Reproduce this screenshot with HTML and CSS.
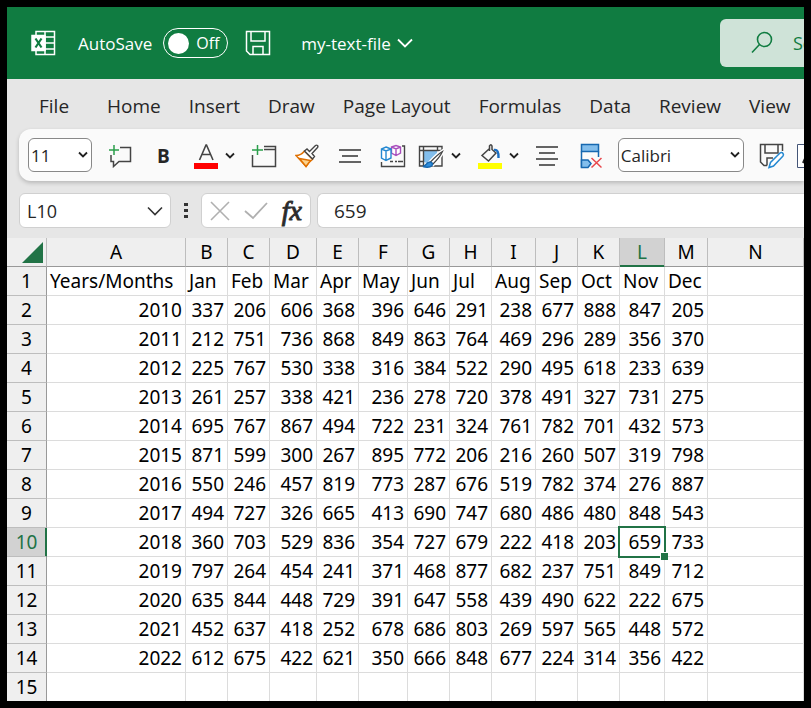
FILE: index.html
```html
<!DOCTYPE html>
<html lang="en">
<head>
  <meta charset="UTF-8" />
  <meta name="viewport" content="width=device-width, initial-scale=1.0" />
  <title>my-text-file</title>
  <link rel="stylesheet" href="styles.css">
</head>
<body>
  <div class="window">

    <!-- Title bar -->
    <header class="title-bar">
      <svg class="app-logo" width="26" height="26" viewBox="0 0 26 26" fill="none" stroke="#fff" stroke-width="1.5">
        <path d="M6 5V1.5h18.500v23H6V21M15 1.500v23M6 7h18.500M15 13h9.500M6 19h18.500" />
        <path d="M2 5.500h13v15H2z" fill="#fff" />
        <path d="M5.500 8.500l6 9M11.500 8.500l-6 9" stroke="#107c41" stroke-width="2.200" />
      </svg>
      <span class="autosave-label" id="autosave-label">AutoSave</span>
      <button class="autosave-toggle" role="switch" aria-checked="false" aria-labelledby="autosave-label">
        <span class="knob"></span>Off
      </button>
      <button class="icon-btn save-btn" aria-label="Save">
        <svg width="26" height="26" viewBox="0 0 26 26" fill="none" stroke="#fff" stroke-width="1.500">
          <path d="M1.500 1.500h23v23H5l-3.500-3.500zM6 1.500V11h14V1.500M8 24.500V16.500h10v8" />
        </svg>
      </button>
      <button class="file-btn">my-text-file
        <svg width="16" height="16" viewBox="0 0 16 16" fill="none" stroke="#fff" stroke-width="1.800"><path d="M1 4.500l7 7 7-7" /></svg>
      </button>
      <label class="search">
        <svg width="22" height="24" viewBox="0 0 22 24" fill="none" stroke="#107c41" stroke-width="1.600"><circle cx="13.500" cy="8.500" r="7" /><path d="M8.500 13.500L1 21.500" /></svg>
        <input type="text" placeholder="Search" aria-label="Search">
      </label>
    </header>

    <!-- Ribbon tabs -->
    <nav class="tabs">
      <a class="file-tab" href="#">File</a>
      <a href="#">Home</a>
      <a href="#">Insert</a>
      <a href="#">Draw</a>
      <a href="#">Page Layout</a>
      <a href="#">Formulas</a>
      <a href="#">Data</a>
      <a href="#">Review</a>
      <a href="#">View</a>
    </nav>

    <!-- Toolbar -->
    <div class="toolbar">
      <select class="size-select" aria-label="Font size"><option>11</option></select>
      <button class="icon-btn comment-btn" aria-label="New comment">
        <svg width="24" height="24" viewBox="0 0 24 24" fill="none" stroke="#444" stroke-width="1.500">
          <path d="M12 3.500h10.500v14H11l-5.500 5v-5H3V11" />
          <path d="M6 1v10M1 6h10" stroke="#2b9f4b" />
        </svg>
      </button>
      <button class="icon-btn bold-btn">B</button>
      <button class="icon-btn color-btn" aria-label="Font color">
        <svg width="24" height="26" viewBox="0 0 24 26" fill="none" stroke="#444" stroke-width="1.600">
          <path d="M5.500 17L12 2h.5L19 17M8 11.500h8.500" />
          <path d="M0 20h24v6H0z" fill="#f00" stroke="none" />
        </svg>
        <svg width="10" height="8" viewBox="0 0 10 8" fill="none" stroke="#222" stroke-width="1.800"><path d="M1 1.500l4 4 4-4" /></svg>
      </button>
      <button class="icon-btn insert-btn" aria-label="New sheet">
        <svg width="26" height="24" viewBox="0 0 26 24" fill="none" stroke="#444" stroke-width="1.500">
          <path d="M13 2.500h11.500v20h-23V11M13 5.500h11" />
          <path d="M6.500 1v10M1 6h11" stroke="#2b9f4b" />
        </svg>
      </button>
      <button class="icon-btn painter-btn" aria-label="Format painter">
        <svg width="24" height="24" viewBox="0 0 24 24" fill="none" stroke="#444" stroke-width="1.400">
          <path d="M1 11.500q5 0 8.500-4.500l8 8.500q-3 2-6.500 7z" fill="#fff" stroke="#e07000" />
          <path d="M4.500 14.500l11 2-4.500 6z" fill="#fbd28c" stroke="#e07000" />
          <path d="M9.500 7l2.500-2 2.500 2.500L20.500 1.500q1-.8 2 0 .8 1 0 2L17 9.500l2.500 3-2 2.500z" fill="#fff" />
        </svg>
      </button>
      <button class="icon-btn center-btn" aria-label="Center">
        <svg width="22" height="16" viewBox="0 0 22 16" stroke="#333" stroke-width="1.500"><path d="M0 2h22M3 8h16M0 14h22" /></svg>
      </button>
      <button class="icon-btn shapes-btn" aria-label="3D models">
        <svg width="26" height="24" viewBox="0 0 26 24" fill="none" stroke-width="1.400">
          <path d="M22 2h2.500v20.500h-23V18M10 17.500h3M15 17.500h2M18 17.500h5" stroke="#444" />
          <path d="M11.500 3l4.500-1.500L20.500 3v6L16 11.500 11.500 9zM11.500 3L16 5l4.500-2M16 5v6.500" fill="#fff" stroke="#a94fbd" />
          <path d="M6 3l5 2v9l-5 2.500L1.500 14V5zM1.500 5L6 7l5-2M6 7v9" fill="#fff" stroke="#2488d1" />
        </svg>
      </button>
      <button class="icon-btn style-btn" aria-label="Table style">
        <svg width="26" height="24" viewBox="0 0 26 24" fill="none" stroke="#444" stroke-width="1.400">
          <path d="M6 7h13v8l-5 6-8-3z" fill="#83beec" stroke="none" />
          <path d="M1.500 2.500h22.500v19.500h-22.500zM1.500 6.500H24M5.500 2.500V22M19.500 2.500v4M1.500 17.500h4" />
          <path d="M24.500 7.500q-5 3-12 10.500l2.500 2q7-7 9.500-12.500z" fill="#fff" stroke="#fff" stroke-width="4" />
          <path d="M24.500 7.500q-5 3-12 10.500l2.500 2q7-7 9.500-12.500z" fill="#fff" stroke-width="1.200" />
          <path d="M5 22.500c3 0 3-4.500 7-4.500 2 0 3 2 2 3.500-2 2-6 2-9 1z" fill="#2e8ddb" stroke="#1768b0" />
        </svg>
        <svg width="10" height="8" viewBox="0 0 10 8" fill="none" stroke="#222" stroke-width="1.800"><path d="M1 1.500l4 4 4-4" /></svg>
      </button>
      <button class="icon-btn fill-btn" aria-label="Fill color">
        <svg width="24" height="26" viewBox="0 0 24 26" fill="none" stroke="#444" stroke-width="1.500">
          <path d="M11 6L4 12.500l6.500 5.500L18 10l-4-3.500V3q-1-2.500-2.500 0v5" />
          <path d="M16 7q5-1 4.500 8" stroke="#1b6ec2" stroke-width="2.400" />
          <path d="M0 20h24v6H0z" fill="#ff0" stroke="none" />
        </svg>
        <svg width="10" height="8" viewBox="0 0 10 8" fill="none" stroke="#222" stroke-width="1.800"><path d="M1 1.500l4 4 4-4" /></svg>
      </button>
      <button class="icon-btn middle-btn" aria-label="Middle align">
        <svg width="22" height="22" viewBox="0 0 22 22" stroke="#333" stroke-width="1.500"><path d="M0 2h22M3 8h16M0 14h22M3 20h16" /></svg>
      </button>
      <button class="icon-btn delete-btn" aria-label="Delete rows">
        <svg width="22" height="26" viewBox="0 0 22 26" fill="none" stroke="#1768b0" stroke-width="1.500">
          <path d="M1.500 1.500h17v7h-17z" fill="#83beec" />
          <path d="M1.500 8.500v16M18.500 8.500V14" />
          <path d="M1.500 17H8l3 3.500-3 4H1.500z" fill="#83beec" />
          <path d="M11.500 15l10 9.500M21.500 15l-10 9.500" stroke="#e8474c" />
        </svg>
      </button>
      <select class="font-select" aria-label="Font"><option>Calibri</option></select>
      <button class="icon-btn save-as-btn" aria-label="Save as">
        <svg width="26" height="26" viewBox="0 0 26 26" fill="none" stroke="#444" stroke-width="1.500">
          <path d="M8 22.500H5L1.500 19V1.500h22V8M6 1.500V10h13V1.500M8 22.500V15h6" />
          <path d="M10 24.500l1.500-5L21 10q2-1 3 .5 1 1.500 0 2.500l-9.500 10z" fill="#fff" stroke="#2488d1" />
        </svg>
      </button>
      <button class="icon-btn text-box-btn" aria-label="Text box">
        <svg width="24" height="24" viewBox="0 0 24 24" fill="#fff" stroke="#445577"><path d="M.5.5h23v23H.5z" /><path d="M6 19l6-14 6 14M8 14h8" fill="none" stroke="#222" stroke-width="2" /></svg>
      </button>
    </div>

    <!-- Formula bar -->
    <div class="formula-bar">
      <button class="name-box">L10
        <svg width="16" height="10" viewBox="0 0 16 10" fill="none" stroke="#333" stroke-width="1.600"><path d="M1 1.500l7 7 7-7" /></svg>
      </button>
      <svg class="dots" width="4" height="16" viewBox="0 0 4 16" fill="#333"><path d="M0 0h4v3H0zM0 6h4v3H0zM0 12h4v3H0z" /></svg>
      <div class="formula-actions">
        <button class="icon-btn" aria-label="Cancel"><svg width="20" height="20" viewBox="0 0 20 20" stroke="#b0b0b0" stroke-width="1.600"><path d="M1 1l18 18M19 1L1 19" /></svg></button>
        <button class="icon-btn" aria-label="Enter"><svg width="24" height="18" viewBox="0 0 24 18" fill="none" stroke="#b0b0b0" stroke-width="1.800"><path d="M1 9l8 7L23 1" /></svg></button>
        <button class="icon-btn fx">fx</button>
      </div>
      <input class="formula-input" type="text" value="659" aria-label="Formula">
    </div>

    <!-- Worksheet, filled by script.js -->
    <table class="sheet" id="sheet"></table>
  </div>

  <script src="script.js"></script>
</body>
</html>
```
FILE: styles.css
```css
* {
  box-sizing: border-box;
}

body {
  margin: 0;
  padding: 7px;
  min-height: 100vh;
  background: #000;
  font-family: "Open Sans", sans-serif;
  color: #262626;
}

.window {
  background: #e6e6e6;
  overflow: hidden;
}

button,
input,
select {
  font-family: inherit;
  color: inherit;
  margin: 0;
}

svg {
  flex: none;
}

.icon-btn {
  display: flex;
  flex: none;
  align-items: center;
  gap: 7px;
  padding: 0;
  border: none;
  background: none;
}

/* Title bar */
.title-bar {
  display: flex;
  align-items: center;
  height: 72px;
  padding-left: 23px;
  background: #107c41;
  color: #fff;
  font-size: 17px;
  white-space: nowrap;
}

.autosave-label {
  margin-left: 22px;
}

.autosave-toggle {
  display: flex;
  flex: none;
  align-items: center;
  gap: 7px;
  width: 65px;
  height: 30px;
  margin-left: 11px;
  padding: 0 4px;
  border: 1px solid #fff;
  border-radius: 15px;
  background: none;
  font-size: 16px;
}

.knob {
  width: 21px;
  height: 21px;
  border-radius: 50%;
  background: #fff;
}

.save-btn {
  margin-left: 17px;
}

.file-btn {
  display: flex;
  align-items: center;
  gap: 6px;
  margin-left: 30px;
  padding: 0;
  border: none;
  background: none;
  font-size: 17px;
}

.search {
  display: flex;
  align-items: center;
  gap: 20px;
  width: 84px;
  height: 48px;
  margin-left: auto;
  padding-left: 31px;
  border-radius: 6px 0 0 6px;
  background: #cfe3d8;
  overflow: hidden;
}

.search input {
  width: 90px;
  flex: none;
  padding: 0;
  border: none;
  background: none;
  font-size: 18px;
}

.search input::placeholder {
  color: #107c41;
}

/* Ribbon */
.tabs {
  display: flex;
  align-items: center;
  gap: 28px;
  height: 50px;
  padding: 4px 0 0 32px;
  font-size: 19px;
  white-space: nowrap;
}

.tabs a {
  color: #262626;
  text-decoration: none;
}

.tabs .file-tab {
  margin-right: 10px;
}

.toolbar {
  display: flex;
  align-items: center;
  height: 52px;
  margin-left: 12px;
  padding-left: 9px;
  border-radius: 12px 0 0 12px;
  background: #fafafa;
  box-shadow: 0 2px 4px rgba(0, 0, 0, 0.2);
}

.toolbar select {
  appearance: none;
  flex: none;
  height: 34px;
  padding: 0 2px;
  border: 1px solid #888;
  border-radius: 6px;
  background: #fff url("data:image/svg+xml,%3Csvg xmlns='http://www.w3.org/2000/svg' width='10' height='8' fill='none' stroke='%23222' stroke-width='1.8'%3E%3Cpath d='M1 1.5l4 4 4-4'/%3E%3C/svg%3E") no-repeat right 3px center;
  font-size: 17px;
}

.size-select {
  width: 64px;
}

.toolbar .icon-btn {
  padding-top: 2px;
}

.font-select {
  width: 126px;
  margin-left: 16px;
}

.comment-btn {
  margin-left: 16px;
}

.toolbar .bold-btn {
  margin-left: 25px;
  font-size: 19px;
  font-weight: 700;
}

.color-btn {
  margin-left: 24px;
}

.insert-btn {
  margin-left: 16px;
}

.painter-btn {
  margin-left: 18px;
}

.center-btn {
  margin-left: 20px;
}

.shapes-btn {
  margin-left: 19px;
}

.style-btn {
  margin-left: 12px;
}

.fill-btn {
  margin-left: 17px;
}

.middle-btn {
  margin-left: 17px;
}

.delete-btn {
  margin-left: 22px;
}

.save-as-btn {
  margin-left: 15px;
}

.text-box-btn {
  margin-left: 12px;
}

/* Formula bar */
.formula-bar {
  display: flex;
  align-items: center;
  padding: 12px 0 10px 12px;
}

.name-box,
.formula-actions,
.formula-input {
  height: 35px;
  border: 1px solid #d0d0d0;
  border-radius: 6px;
  background: #fff;
  font-size: 19px;
}

.name-box {
  display: flex;
  flex: none;
  align-items: center;
  justify-content: space-between;
  width: 152px;
  padding: 0 7px;
  font-size: 18px;
}

.dots {
  margin: 0 13px;
}

.formula-actions {
  display: flex;
  flex: none;
  align-items: center;
  justify-content: space-between;
  width: 110px;
  padding: 0 8px;
}

.fx {
  font-family: "Liberation Serif", serif;
  font-size: 28px;
  font-style: italic;
  -webkit-text-stroke: 1px #333;
}

.formula-input {
  flex: 1;
  min-width: 0;
  margin-left: 6px;
  padding: 0 16px;
  border-right: none;
  border-radius: 6px 0 0 6px;
}

/* Worksheet */
.sheet {
  width: 100%;
  border-collapse: separate;
  border-spacing: 0;
  table-layout: fixed;
  background: #fff;
  color: #000;
  font-family: "Noto Sans", sans-serif;
  font-size: 19px;
  line-height: 28px;
  white-space: nowrap;
}

.sheet th,
.sheet td {
  height: 29px;
  padding: 0 3px;
  border-right: 1px solid #dcdcdc;
  border-bottom: 1px solid #dcdcdc;
  text-align: left;
}

.sheet .number {
  text-align: right;
}

.sheet th {
  padding: 0;
  background: #efefef;
  border-right-color: #bdbdbd;
  border-bottom-color: #bdbdbd;
  font-weight: 400;
  text-align: center;
}

.sheet thead th {
  border-bottom-color: #999;
}

.sheet tbody th {
  border-right-color: #999;
}

.sheet tbody tr:last-child > * {
  height: 28px;
  border-bottom: none;
}

.sheet .corner {
  padding: 4px 3px 3px 15px;
}

.corner svg {
  display: block;
}

.sheet .current {
  background: #d2d2d2;
  color: #217346;
}

.sheet thead .current {
  border-bottom-color: #217346;
  box-shadow: inset 0 -1px #217346;
}

.sheet tbody .current {
  border-right-color: #217346;
  box-shadow: inset -1px 0 #217346;
}

.selected {
  position: relative;
}

.selected::before {
  content: "";
  position: absolute;
  inset: -2px;
  border: 2px solid #217346;
}

.selected::after {
  content: "";
  position: absolute;
  right: -4px;
  bottom: -4px;
  width: 7px;
  height: 7px;
  border: 1px solid #fff;
  border-width: 1px 0 0 1px;
  background: #217346;
}
```
FILE: script.js
```js
const widths = [40, 139, 42, 42, 47, 42, 49, 42, 42, 44, 42, 42, 45, 43];
const columns = "ABCDEFGHIJKLMN".split("");
const rows = [
  ["Years/Months", "Jan", "Feb", "Mar", "Apr", "May", "Jun", "Jul", "Aug", "Sep", "Oct", "Nov", "Dec"],
  [2010, 337, 206, 606, 368, 396, 646, 291, 238, 677, 888, 847, 205],
  [2011, 212, 751, 736, 868, 849, 863, 764, 469, 296, 289, 356, 370],
  [2012, 225, 767, 530, 338, 316, 384, 522, 290, 495, 618, 233, 639],
  [2013, 261, 257, 338, 421, 236, 278, 720, 378, 491, 327, 731, 275],
  [2014, 695, 767, 867, 494, 722, 231, 324, 761, 782, 701, 432, 573],
  [2015, 871, 599, 300, 267, 895, 772, 206, 216, 260, 507, 319, 798],
  [2016, 550, 246, 457, 819, 773, 287, 676, 519, 782, 374, 276, 887],
  [2017, 494, 727, 326, 665, 413, 690, 747, 680, 486, 480, 848, 543],
  [2018, 360, 703, 529, 836, 354, 727, 679, 222, 418, 203, 659, 733],
  [2019, 797, 264, 454, 241, 371, 468, 877, 682, 237, 751, 849, 712],
  [2020, 635, 844, 448, 729, 391, 647, 558, 439, 490, 622, 222, 675],
  [2021, 452, 637, 418, 252, 678, 686, 803, 269, 597, 565, 448, 572],
  [2022, 612, 675, 422, 621, 350, 666, 848, 677, 224, 314, 356, 422],
  []
];
const selectedColumn = "L";
const selectedRow = 10;

// Column widths, the last column takes what is left
let html = "<colgroup>" + widths.map(w => `<col style="width: ${w}px">`).join("") + "<col></colgroup>";

// Column letters
html += '<thead><tr><th class="corner"><svg width="21" height="21" viewBox="0 0 21 21"><path d="M21 0v21H0z" fill="#217346"/></svg></th>';
columns.forEach(letter => {
  html += `<th scope="col"${letter === selectedColumn ? ' class="current"' : ""}>${letter}</th>`;
});
html += "</tr></thead><tbody>";

// Cells
rows.forEach((row, i) => {
  const number = i + 1;
  html += `<tr><th scope="row"${number === selectedRow ? ' class="current"' : ""}>${number}</th>`;
  columns.forEach((letter, j) => {
    const value = row[j] === undefined ? "" : row[j];
    const names = [];
    if (typeof value === "number") names.push("number");
    if (number === selectedRow && letter === selectedColumn) names.push("selected");
    html += `<td class="${names.join(" ")}">${value}</td>`;
  });
  html += "</tr>";
});

document.getElementById("sheet").innerHTML = html + "</tbody>";
```
